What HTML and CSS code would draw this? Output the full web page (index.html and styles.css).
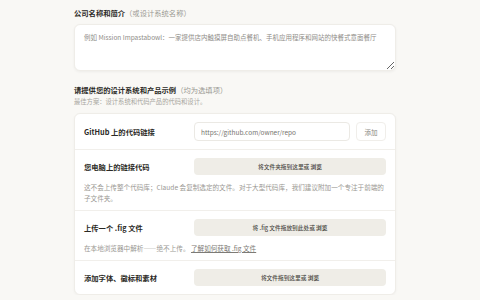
FILE: index.html
```html
<!DOCTYPE html>
<html lang="zh-CN">

<head>
    <meta charset="UTF-8">
    <title>设计系统</title>
    <link rel="stylesheet" href="styles.css">
</head>

<body>
    <div class="page">
        <!-- 公司名称 -->
        <div class="field-title">公司名称和简介<span class="muted">（或设计系统名称）</span></div>
        <textarea class="intro" placeholder="例如 Mission Impastabowl：一家提供店内触摸屏自助点餐机、手机应用程序和网站的快餐式意面餐厅"></textarea>

        <!-- 示例 -->
        <div class="field-title second">请提供您的设计系统和产品示例<span class="muted">（均为选填项）</span></div>
        <div class="field-sub">最佳方案：设计系统和代码产品的代码和设计。</div>

        <div class="card">
            <div class="row">
                <div class="line">
                    <div class="label">GitHub 上的代码链接</div>
                    <div class="ctrl">
                        <input class="url" type="text" placeholder="https://github.com/owner/repo">
                        <button class="add">添加</button>
                    </div>
                </div>
            </div>
            <div class="row has-desc">
                <div class="line">
                    <div class="label">您电脑上的链接代码</div>
                    <div class="ctrl"><div class="drop">将文件夹拖到这里或 <b>浏览</b></div></div>
                </div>
                <p class="desc">这不会上传整个代码库；Claude 会复制选定的文件。对于大型代码库，我们建议附加一个专注于前端的子文件夹。</p>
            </div>
            <div class="row has-desc">
                <div class="line">
                    <div class="label">上传一个 .fig 文件</div>
                    <div class="ctrl"><div class="drop">将 .fig 文件拖放到此处或 <b>浏览</b></div></div>
                </div>
                <p class="desc">在本地浏览器中解析——绝不上传。 <a href="#">了解如何获取 .fig 文件</a></p>
            </div>
            <div class="row">
                <div class="line">
                    <div class="label">添加字体、徽标和素材</div>
                    <div class="ctrl"><div class="drop">将文件拖到这里或 <b>浏览</b></div></div>
                </div>
            </div>
        </div>
    </div>
</body>

</html>
```

FILE: styles.css
```css
html,
body {
    margin: 0;
    padding: 0;
    background: #f9f8f5;
    font-family: "Noto Sans CJK SC", "Noto Sans", sans-serif;
    color: #222;
}

.page {
    width: 322px;
    margin-left: 74px;
    padding-top: 7px;
}

.field-title {
    font-size: 7.3px;
    font-weight: 700;
    line-height: 12px;
    color: #2a2925;
}

.field-title.second {
    margin-top: 13px;
}

.muted {
    font-weight: 400;
    color: #9a9893;
}

.field-sub {
    font-size: 6.3px;
    line-height: 12px;
    color: #a8a6a0;
}

/* 文本框 */
.intro {
    display: block;
    box-sizing: border-box;
    width: 322px;
    height: 47px;
    margin-top: 5px;
    padding: 7px 9px;
    border: 1px solid #efede8;
    border-radius: 6px;
    background: #fff;
    box-shadow: 0 1px 3px rgba(0, 0, 0, .05);
    font-family: inherit;
    font-size: 6.5px;
    line-height: 10px;
    resize: vertical;
    outline: none;
}

.intro::placeholder {
    color: #8f8d88;
}

/* 卡片 */
.card {
    margin-top: 5px;
    background: #fff;
    border: 1px solid #efede8;
    border-radius: 6px;
    box-shadow: 0 1px 3px rgba(0, 0, 0, .04);
}

.row {
    padding: 8px 9px;
    border-bottom: 1px solid #f1efeb;
}

.row.has-desc {
    padding-bottom: 6px;
}

.row:last-child {
    border-bottom: 0;
}

.line {
    display: flex;
    align-items: center;
}

.label {
    width: 110px;
    flex: none;
    font-size: 7.3px;
    font-weight: 700;
    color: #2a2925;
}

.ctrl {
    flex: 1;
    display: flex;
    gap: 6px;
}

.url {
    box-sizing: border-box;
    width: 156px;
    height: 19px;
    padding: 0 6px;
    border: 1px solid #ebe9e4;
    border-radius: 4px;
    font-family: inherit;
    font-size: 6.5px;
    outline: none;
}

.url::placeholder {
    color: #77756f;
}

.add {
    width: 30px;
    height: 19px;
    padding: 0;
    border: 1px solid #f0eeea;
    border-radius: 4px;
    background: #fff;
    font-family: inherit;
    font-size: 6.5px;
    color: #8a8883;
}

.drop {
    flex: 1;
    height: 17px;
    line-height: 17px;
    border-radius: 4px;
    background: #efede7;
    text-align: center;
    font-size: 5.7px;
    font-weight: 500;
    color: #4c4a45;
}

.drop b {
    font-weight: 700;
}

.desc {
    margin: 7px 0 0;
    font-size: 6.6px;
    line-height: 11px;
    color: #9a9893;
}

.desc a {
    color: #7d7b76;
}
```
